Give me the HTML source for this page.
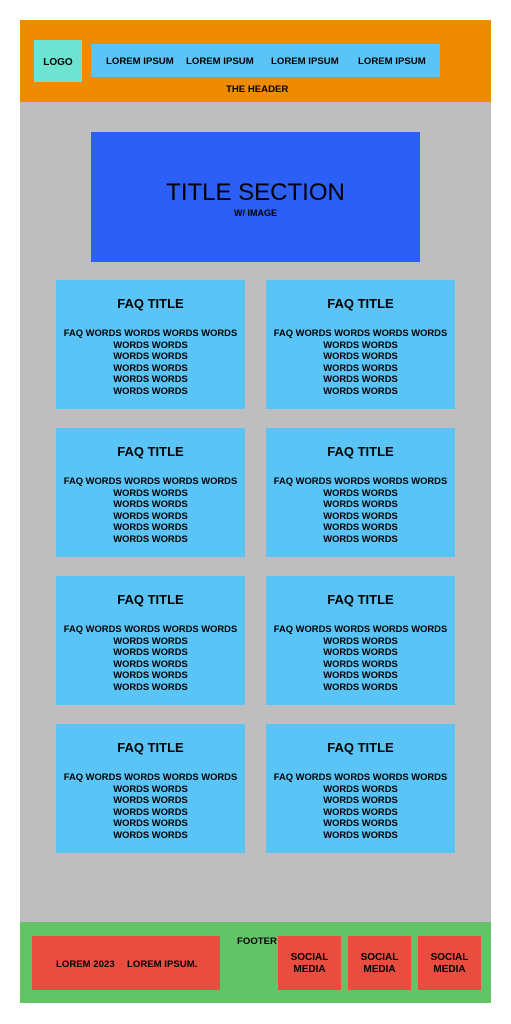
<!DOCTYPE html>
<html><head><meta charset="utf-8"><style>
*{margin:0;padding:0;box-sizing:border-box}
body{width:511px;height:1024px;background:#fff;position:relative;font-family:"Liberation Sans",Arial,sans-serif;color:#000;overflow:hidden}
.a{position:absolute}
.c{display:flex;align-items:center;justify-content:center;text-align:center}
.b{font-weight:bold}
.card{position:absolute;width:189px;height:129px;background:#5AC4F6;text-align:center;font-weight:bold}
.card h3{font-size:13px;position:absolute;top:16px;left:0;right:0;font-weight:bold}
.card p{font-size:9.4px;line-height:11.5px;position:absolute;top:47px;left:0;right:0}
.soc{position:absolute;top:936px;width:63px;height:54px;background:#E94D3F;font-size:10px;font-weight:bold;line-height:12px;padding-top:2px}
</style></head><body>
<div class="a" style="left:20px;top:20px;width:471px;height:82px;background:#EF8B00"></div>
<div class="a c b" style="left:34px;top:40px;width:48px;height:42px;background:#6EE3D2;font-size:10px;padding-top:2px">LOGO</div>
<div class="a b" style="left:91px;top:44px;width:349px;height:33px;background:#5AC4F6;font-size:9.6px">
<span class="a" style="left:15px;top:12px">LOREM IPSUM</span>
<span class="a" style="left:95px;top:12px">LOREM IPSUM</span>
<span class="a" style="left:180px;top:12px">LOREM IPSUM</span>
<span class="a" style="left:267px;top:12px">LOREM IPSUM</span>
</div>
<div class="a b" style="left:226px;top:84px;font-size:9.6px">THE HEADER</div>
<div class="a" style="left:20px;top:102px;width:471px;height:820px;background:#BEBEBE"></div>
<div class="a" style="left:91px;top:132px;width:329px;height:130px;background:#2B5FF6;text-align:center">
<div class="a" style="left:0;right:0;top:47px;font-size:24px">TITLE SECTION</div>
<div class="a b" style="left:0;right:0;top:76px;font-size:9px">W/ IMAGE</div>
</div>
<div class="card" style="left:56px;top:280px"><h3>FAQ TITLE</h3><p>FAQ WORDS WORDS WORDS WORDS<br>WORDS WORDS<br>WORDS WORDS<br>WORDS WORDS<br>WORDS WORDS<br>WORDS WORDS</p></div>
<div class="card" style="left:266px;top:280px"><h3>FAQ TITLE</h3><p>FAQ WORDS WORDS WORDS WORDS<br>WORDS WORDS<br>WORDS WORDS<br>WORDS WORDS<br>WORDS WORDS<br>WORDS WORDS</p></div>
<div class="card" style="left:56px;top:428px"><h3>FAQ TITLE</h3><p>FAQ WORDS WORDS WORDS WORDS<br>WORDS WORDS<br>WORDS WORDS<br>WORDS WORDS<br>WORDS WORDS<br>WORDS WORDS</p></div>
<div class="card" style="left:266px;top:428px"><h3>FAQ TITLE</h3><p>FAQ WORDS WORDS WORDS WORDS<br>WORDS WORDS<br>WORDS WORDS<br>WORDS WORDS<br>WORDS WORDS<br>WORDS WORDS</p></div>
<div class="card" style="left:56px;top:576px"><h3>FAQ TITLE</h3><p>FAQ WORDS WORDS WORDS WORDS<br>WORDS WORDS<br>WORDS WORDS<br>WORDS WORDS<br>WORDS WORDS<br>WORDS WORDS</p></div>
<div class="card" style="left:266px;top:576px"><h3>FAQ TITLE</h3><p>FAQ WORDS WORDS WORDS WORDS<br>WORDS WORDS<br>WORDS WORDS<br>WORDS WORDS<br>WORDS WORDS<br>WORDS WORDS</p></div>
<div class="card" style="left:56px;top:724px"><h3>FAQ TITLE</h3><p>FAQ WORDS WORDS WORDS WORDS<br>WORDS WORDS<br>WORDS WORDS<br>WORDS WORDS<br>WORDS WORDS<br>WORDS WORDS</p></div>
<div class="card" style="left:266px;top:724px"><h3>FAQ TITLE</h3><p>FAQ WORDS WORDS WORDS WORDS<br>WORDS WORDS<br>WORDS WORDS<br>WORDS WORDS<br>WORDS WORDS<br>WORDS WORDS</p></div>
<div class="a" style="left:20px;top:922px;width:471px;height:81px;background:#62C467"></div>
<div class="a b" style="left:32px;top:936px;width:188px;height:54px;background:#E94D3F;font-size:9.6px">
<span class="a" style="left:24px;top:23px">LOREM 2023</span>
<span class="a" style="left:95px;top:23px">LOREM IPSUM.</span>
</div>
<div class="a b" style="left:237px;top:936px;font-size:9.6px">FOOTER</div>
<div class="soc c" style="left:278px">SOCIAL<br>MEDIA</div>
<div class="soc c" style="left:348px">SOCIAL<br>MEDIA</div>
<div class="soc c" style="left:418px">SOCIAL<br>MEDIA</div>
</body></html>
